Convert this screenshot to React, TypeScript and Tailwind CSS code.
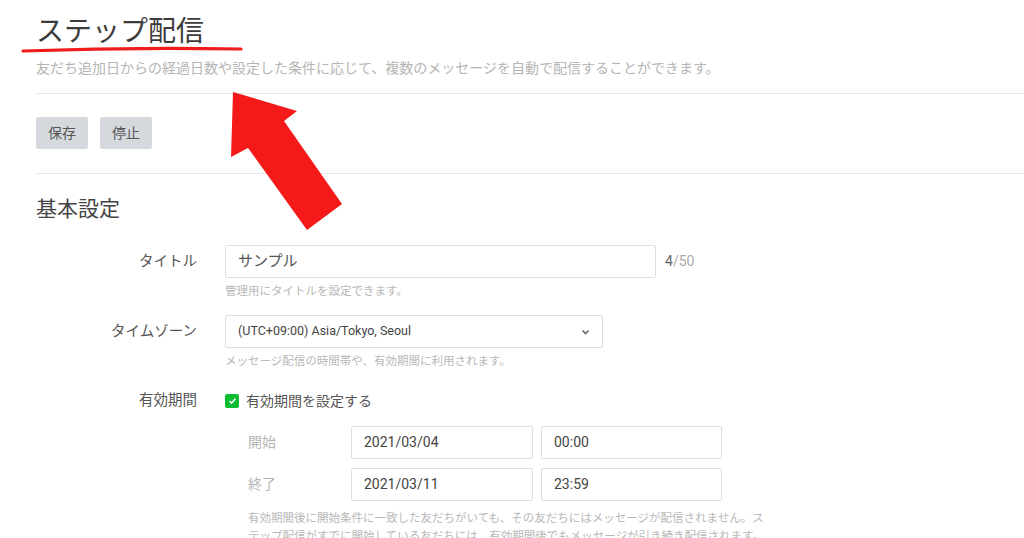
import React from "react";

const font = { fontFamily: 'Roboto, "Noto Sans CJK JP", sans-serif' };

function Label({ children, className = "" }: { children: React.ReactNode; className?: string }) {
  return (
    <div className={`w-[161px] shrink-0 text-right text-[14.5px] text-[#555] ${className}`}>{children}</div>
  );
}

export default function App() {
  return (
    <div className="relative w-[1024px] h-[538px] overflow-hidden bg-white" style={font}>
      <div className="pl-[36px]">
        <h1 className="pt-[14px] text-[28px] leading-[36px] text-[#3c3c3c] font-normal">ステップ配信</h1>
        <p className="mt-[8px] text-[14px] leading-[20px] text-[#b5b5b5]">
          友だち追加日からの経過日数や設定した条件に応じて、複数のメッセージを自動で配信することができます。
        </p>
        <div className="mt-[15px] border-t border-[#e8e8e8]" />
        <div className="mt-[23px] flex gap-[12px]">
          <button className="h-[32px] w-[52px] rounded-[2px] bg-[#d5d8dd] text-[14px] text-[#555]">保存</button>
          <button className="h-[32px] w-[52px] rounded-[2px] bg-[#d5d8dd] text-[14px] text-[#555]">停止</button>
        </div>
        <div className="mt-[24px] border-t border-[#e8e8e8]" />
        <h2 className="mt-[21px] text-[21px] leading-[28px] text-[#444] font-normal">基本設定</h2>

        <div className="mt-[22px] flex items-center gap-[28px]">
          <Label>タイトル</Label>
          <div className="flex items-center">
            <div className="h-[33px] w-[431px] border border-[#dedede] rounded-[2px] px-[12px] flex items-center text-[15px] text-[#555]">
              サンプル
            </div>
            <span className="ml-[9px] text-[14px] text-[#aaa]">
              <span className="text-[#666]">4</span>/50
            </span>
          </div>
        </div>
        <div className="ml-[189px] mt-[5px] text-[11.5px] leading-[16px] text-[#b8b8b8]">管理用にタイトルを設定できます。</div>

        <div className="mt-[16px] flex items-center gap-[28px]">
          <Label>タイムゾーン</Label>
          <div className="h-[33px] w-[378px] border border-[#dedede] rounded-[2px] pl-[12px] pr-[12px] flex items-center justify-between text-[12.5px] text-[#444]">
            <span>(UTC+09:00) Asia/Tokyo, Seoul</span>
            <svg width="9" height="6" viewBox="0 0 9 6">
              <path d="M1.5 1.5 L4.5 4.5 L7.5 1.5" fill="none" stroke="#666" strokeWidth="1.6" />
            </svg>
          </div>
        </div>
        <div className="ml-[189px] mt-[5px] text-[11.5px] leading-[16px] text-[#b8b8b8]">
          メッセージ配信の時間帯や、有効期間に利用されます。
        </div>

        <div className="mt-[22px] flex items-center gap-[28px] h-[20px]">
          <Label>有効期間</Label>
          <div className="flex items-center gap-[7px]">
            <div className="h-[14px] w-[14px] rounded-[2px] bg-[#0fbd33] flex items-center justify-center">
              <svg width="9" height="8" viewBox="0 0 9 8">
                <path d="M1.5 4 L3.6 6 L7.5 1.8" fill="none" stroke="#fff" strokeWidth="1.6" />
              </svg>
            </div>
            <span className="text-[14px] text-[#555]">有効期間を設定する</span>
          </div>
        </div>

        <div className="ml-[212px] mt-[15px] flex items-center">
          <div className="w-[103px] text-[14px] text-[#b5b5b5]">開始</div>
          <div className="h-[33px] w-[182px] border border-[#dedede] rounded-[2px] px-[12px] flex items-center text-[14px] text-[#444]">2021/03/04</div>
          <div className="ml-[8px] h-[33px] w-[181px] border border-[#dedede] rounded-[2px] px-[12px] flex items-center text-[14px] text-[#444]">00:00</div>
        </div>
        <div className="ml-[212px] mt-[9px] flex items-center">
          <div className="w-[103px] text-[14px] text-[#b5b5b5]">終了</div>
          <div className="h-[33px] w-[182px] border border-[#dedede] rounded-[2px] px-[12px] flex items-center text-[14px] text-[#444]">2021/03/11</div>
          <div className="ml-[8px] h-[33px] w-[181px] border border-[#dedede] rounded-[2px] px-[12px] flex items-center text-[14px] text-[#444]">23:59</div>
        </div>
        <div className="ml-[212px] mt-[8px] text-[11.5px] leading-[18px] text-[#b8b8b8] whitespace-nowrap">
          有効期間後に開始条件に一致した友だちがいても、その友だちにはメッセージが配信されません。ス
          <br />
          テップ配信がすでに開始している友だちには、有効期間後でもメッセージが引き続き配信されます。
        </div>
      </div>

      <svg className="absolute left-0 top-0 pointer-events-none" width="1024" height="538" viewBox="0 0 1024 538">
        <path d="M23 51 Q130 47 241 49" fill="none" stroke="#ee1c1c" strokeWidth="3.2" strokeLinecap="round" />
        <polygon points="233,92 297,111 284,121 342,204 307,230 248,148 231,157" fill="#f41a1a" />
      </svg>
    </div>
  );
}
